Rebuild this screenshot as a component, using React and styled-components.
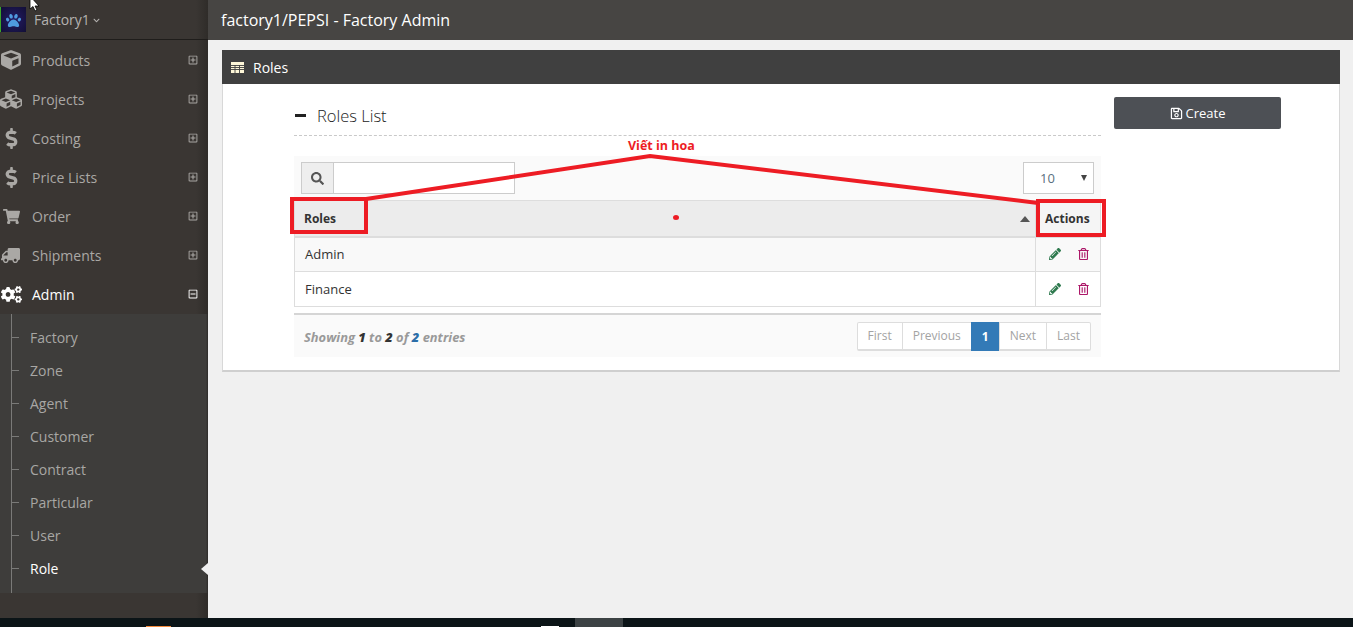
import React from "react"
import styled, { createGlobalStyle } from "styled-components"
import {
  FaCube,
  FaCubes,
  FaDollarSign,
  FaShoppingCart,
  FaTruck,
  FaCogs,
  FaRegPlusSquare,
  FaRegMinusSquare,
  FaSearch,
  FaRegSave,
  FaPencilAlt,
  FaRegTrashAlt,
  FaChevronDown,
  FaPaw,
} from "react-icons/fa"

const menu = [
  { label: "Products", icon: FaCube, size: 20 },
  { label: "Projects", icon: FaCubes, size: 22 },
  { label: "Costing", icon: FaDollarSign, size: 21 },
  { label: "Price Lists", icon: FaDollarSign, size: 21 },
  { label: "Order", icon: FaShoppingCart, size: 17 },
  { label: "Shipments", icon: FaTruck, size: 19, flip: true },
]

const subMenu = ["Factory", "Zone", "Agent", "Customer", "Contract", "Particular", "User", "Role"]

const TableIcon = () => (
  <svg width="13" height="11" viewBox="0 0 13 11">
    <rect width="13" height="11" fill="#fdf6d8" />
    <path d="M0 3.5h13M0 5.5h13M0 7.5h13M4 3v8M8.5 3v8" stroke="#404040" strokeWidth="0.9" />
  </svg>
)

const App = () => {
  return (
    <Screen>
      <GlobalStyle />
      <Main>
        <Sidebar>
          <Brand>
            <Logo>
              <FaPaw />
            </Logo>
            <BrandName>Factory1</BrandName>
            <FaChevronDown size={7} />
          </Brand>
          <Nav>
            {menu.map((item) => (
              <NavItem key={item.label}>
                <NavIcon $flip={item.flip}>
                  <item.icon size={item.size} />
                </NavIcon>
                <NavLabel>{item.label}</NavLabel>
                <FaRegPlusSquare size={10} />
              </NavItem>
            ))}
            <NavItem $open>
              <NavIcon>
                <FaCogs size={21} />
              </NavIcon>
              <NavLabel>Admin</NavLabel>
              <FaRegMinusSquare size={10} />
            </NavItem>
          </Nav>
          <SubNav>
            {subMenu.map((label) => (
              <SubItem key={label} $active={label === "Role"}>
                {label}
              </SubItem>
            ))}
          </SubNav>
        </Sidebar>
        <Content>
          <TitleBar>factory1/PEPSI - Factory Admin</TitleBar>
          <Page>
            <Panel>
              <PanelHead>
                <TableIcon />
                Roles
              </PanelHead>
              <PanelBody>
                <ListColumn>
                  <ListTitle>
                    <TitleDash />
                    Roles List
                  </ListTitle>
                  <Toolbar>
                    <SearchGroup>
                      <SearchAddon>
                        <FaSearch size={13} />
                      </SearchAddon>
                      <SearchInput />
                    </SearchGroup>
                    <PageSize>
                      10
                      <SizeCaret />
                    </PageSize>
                  </Toolbar>
                  <Table>
                    <thead>
                      <tr>
                        <HeadCell $sorted>
                          Roles
                          <SortCaret />
                        </HeadCell>
                        <HeadCell $narrow>Actions</HeadCell>
                      </tr>
                    </thead>
                    <tbody>
                      {["Admin", "Finance"].map((role, i) => (
                        <Row key={role} $odd={i === 0}>
                          <Cell>{role}</Cell>
                          <ActionCell>
                            <ActionIcons>
                              <EditIcon />
                              <DeleteIcon />
                            </ActionIcons>
                          </ActionCell>
                        </Row>
                      ))}
                    </tbody>
                  </Table>
                  <Footer>
                    <Info>
                      Showing <b>1</b> to <b>2</b> of <Total>2</Total> entries
                    </Info>
                    <Pager>
                      <PageLink>First</PageLink>
                      <PageLink>Previous</PageLink>
                      <PageLink $current>1</PageLink>
                      <PageLink>Next</PageLink>
                      <PageLink>Last</PageLink>
                    </Pager>
                  </Footer>
                </ListColumn>
                <CreateButton>
                  <FaRegSave size={13} />
                  Create
                </CreateButton>
              </PanelBody>
            </Panel>
          </Page>
        </Content>
      </Main>
      <Taskbar>
        <TaskMark $color="#f58b3c" $width={25} $height={1} $left={146} />
        <TaskMark $color="#ffffff" $width={18} $height={1} $left={370} />
        <TaskMark $color="#3c4244" $width={48} $height={9} $left={16} />
      </Taskbar>

      {/* annotation drawn over the screenshot */}
      <Cursor viewBox="0 0 14 12">
        <path d="M1 -4 L1 9 L4 6.5 L6 11 L8 10 L6 6 L10 6 Z" fill="#fff" stroke="#000" strokeWidth="0.8" />
      </Cursor>
      <Arrow viewBox="0 0 1353 627">
        <polyline points="366,199 650,156 1038,203" fill="none" stroke="#ed1c24" strokeWidth="4" />
      </Arrow>
      <Note>Viết in hoa</Note>
      <MarkBox $left={290} $top={197} $width={78} $height={37} />
      <MarkBox $left={1036} $top={199} $width={70} $height={38} />
      <Dot />
      <ActiveArrow />
    </Screen>
  )
}

export default App

const GlobalStyle = createGlobalStyle`
  html, body {
    margin: 0;
    padding: 0;
    height: 100%;
    overflow: hidden;
  }

  body {
    font-family: "Open Sans", "Liberation Sans", sans-serif;
    font-size: 13px;
    color: #333;
    background: #f0f0f0;
  }
`

const Screen = styled.div`
  position: relative;
  width: 1353px;
  height: 627px;
  overflow: hidden;
  display: flex;
  flex-direction: column;
`

const Main = styled.div`
  display: flex;
  height: 618px;
  background: #f0f0f0;
`

const Sidebar = styled.aside`
  width: 208px;
  flex: none;
  display: flex;
  flex-direction: column;
  background: linear-gradient(to right, #3a3633 0, #3a3633 196px, #2f2c29 208px);
  color: #a8a8a8;
`

const Brand = styled.div`
  height: 39px;
  flex: none;
  display: flex;
  align-items: center;
  gap: 3px;
  border-bottom: 1px solid #1f1d1b;
  color: #b4b2b0;
  box-sizing: content-box;

  svg:last-child {
    margin-top: 1px;
  }
`

const Logo = styled.div`
  width: 25px;
  height: 25px;
  margin: 0 5px 0 0;
  display: flex;
  align-items: center;
  justify-content: center;
  border-left: 1px solid #3aa629;
  background: radial-gradient(circle, #241c66 0, #120f36 100%);
  color: #4f9be0;
  font-size: 15px;
`

const BrandName = styled.span`
  font-size: 14px;
`

const Nav = styled.nav`
  display: flex;
  flex-direction: column;
`

const NavItem = styled.div`
  height: ${(p) => (p.$open ? "40px" : "39px")};
  display: flex;
  align-items: center;
  padding: ${(p) => (p.$open ? "0" : "1px")} 10px 0 0;
  box-sizing: border-box;
  color: ${(p) => (p.$open ? "#fff" : "#aaa8a5")};
`

const NavIcon = styled.span`
  width: 22px;
  margin-right: 10px;
  display: flex;
  justify-content: center;
  transform: ${(p) => (p.$flip ? "scaleX(-1)" : "none")};
`

const NavLabel = styled.span`
  flex: 1;
  font-size: 14px;
`

const SubNav = styled.ul`
  list-style: none;
  margin: 0;
  padding: 7px 0 8px;
  height: 279px;
  box-sizing: border-box;
  background: linear-gradient(to right, #3e3d3b 0, #3e3d3b 206px, #2d2b29 208px);
  position: relative;

  &::before {
    content: "";
    position: absolute;
    left: 11px;
    top: 0;
    bottom: 0;
    border-left: 1px solid #7a7a78;
  }
`

const SubItem = styled.li`
  position: relative;
  height: 33px;
  line-height: 33px;
  padding-left: 30px;
  font-size: 14px;
  color: ${(p) => (p.$active ? "#fff" : "#a8a7a4")};

  &::before {
    content: "";
    position: absolute;
    left: 12px;
    top: 16px;
    width: 7px;
    border-top: 1px solid #7a7a78;
  }
`

const Content = styled.div`
  flex: 1;
  min-width: 0;
  display: flex;
  flex-direction: column;
`

const TitleBar = styled.header`
  height: 40px;
  flex: none;
  display: flex;
  align-items: center;
  padding-left: 13px;
  background: #474543;
  color: #fff;
  font-size: 16px;
`

const Page = styled.main`
  padding: 10px 13px 0 14px;
`

const Panel = styled.section`
  background: #fff;
  border: 1px solid #d8d8d8;
  border-top: 0;
  border-bottom: 2px solid #cfcfcf;
`

const PanelHead = styled.div`
  height: 34px;
  margin: 0 -1px;
  display: flex;
  align-items: center;
  gap: 9px;
  padding-left: 9px;
  background: #404040;
  color: #fff;
  font-size: 14px;
`

const PanelBody = styled.div`
  display: flex;
  align-items: flex-start;
  padding: 13px 0 13px 71px;
  gap: 13px;
`

const ListColumn = styled.div`
  width: 807px;
  flex: none;
`

const ListTitle = styled.h3`
  height: 36px;
  margin: 0 0 20px;
  padding-bottom: 2px;
  display: flex;
  align-items: center;
  gap: 11px;
  box-sizing: content-box;
  border-bottom: 1px dashed #c9c9c9;
  font-size: 16.5px;
  font-weight: 300;
  color: #222;
`

const TitleDash = styled.span`
  width: 11px;
  height: 3px;
  margin-left: 1px;
  background: #222;
`

const Toolbar = styled.div`
  height: 44px;
  box-sizing: border-box;
  display: flex;
  justify-content: space-between;
  padding: 6px 7px 0;
  background: #fafafa;
`

const SearchGroup = styled.div`
  display: flex;
  height: 32px;
`

const SearchAddon = styled.span`
  width: 31px;
  display: flex;
  align-items: center;
  justify-content: center;
  border: 1px solid #ccc;
  background: #eee;
  color: #555;
`

const SearchInput = styled.div`
  width: 180px;
  border: 1px solid #ccc;
  border-left: 0;
  background: #fff;
`

const PageSize = styled.div`
  position: relative;
  width: 53px;
  height: 30px;
  display: flex;
  align-items: center;
  padding-left: 16px;
  border: 1px solid #ccc;
  background: #fff;
  color: #5a6f80;
  font-size: 13px;
`

const SizeCaret = styled.span`
  position: absolute;
  right: 6px;
  top: 12px;
  border-left: 3px solid transparent;
  border-right: 3px solid transparent;
  border-top: 6px solid #444;
`

const Table = styled.table`
  width: 100%;
  border-collapse: collapse;
  table-layout: fixed;
`

const HeadCell = styled.th`
  position: relative;
  width: ${(p) => (p.$narrow ? "65px" : "auto")};
  height: 36px;
  padding: 0 9px;
  box-sizing: border-box;
  text-align: left;
  font-size: 12px;
  font-weight: 700;
  color: #333;
  background: ${(p) => (p.$sorted ? "#ececec" : "#f5f5f5")};
  border: 1px solid #ddd;
  border-bottom: 2px solid #ddd;
`

const SortCaret = styled.span`
  position: absolute;
  right: 5px;
  top: 15px;
  border-left: 5px solid transparent;
  border-right: 5px solid transparent;
  border-bottom: 6px solid #555;
`

const Row = styled.tr`
  background: ${(p) => (p.$odd ? "#f9f9f9" : "#fff")};
`

const Cell = styled.td`
  height: 35px;
  padding: 0 10px;
  box-sizing: border-box;
  border: 1px solid #ddd;
  font-size: 13px;
  color: #333;
`

const ActionCell = styled(Cell)`
  padding: 0;
`

const ActionIcons = styled.div`
  display: flex;
  justify-content: center;
  align-items: center;
  gap: 17px;
  padding-left: 2px;
`

const EditIcon = styled(FaPencilAlt)`
  width: 12px;
  height: 12px;
  color: #2f7a4f;
`

const DeleteIcon = styled(FaRegTrashAlt)`
  width: 11px;
  height: 12px;
  color: #ac1768;
`

const Footer = styled.div`
  height: 44px;
  margin-top: 6px;
  box-sizing: border-box;
  display: flex;
  align-items: center;
  justify-content: space-between;
  padding: 0 10px;
  border-top: 2px solid #d5d5d5;
  background: #fafafa;
`

const Info = styled.span`
  padding-top: 1px;
  font-size: 12.9px;
  font-weight: 700;
  font-style: italic;
  color: #999;

  b {
    color: #333;
  }
`

const Total = styled.b`
  && {
    color: #2b6ea8;
  }
`

const Pager = styled.div`
  display: flex;
  height: 29px;
  border: 1px solid #ddd;
  border-bottom-width: 2px;
  border-radius: 2px;
  background: #fff;
  box-sizing: border-box;
`

const PageLink = styled.span`
  display: flex;
  align-items: center;
  padding: 0 10px 0 ${(p) => (p.$current ? "11px" : "10px")};
  margin-top: ${(p) => (p.$current ? "-1px" : "0")};
  margin-bottom: ${(p) => (p.$current ? "-2px" : "0")};
  border-left: ${(p) => (p.$current ? "0" : "1px solid #ddd")};
  font-size: 12px;
  font-weight: ${(p) => (p.$current ? 700 : 400)};
  color: ${(p) => (p.$current ? "#fff" : "#a3a3a3")};
  background: ${(p) => (p.$current ? "#337ab7" : "transparent")};

  &:first-child {
    border-left: 0;
  }
`

const CreateButton = styled.button`
  width: 167px;
  height: 32px;
  display: flex;
  align-items: center;
  justify-content: center;
  gap: 3px;
  border: 0;
  border-radius: 2px;
  background: #4d5055;
  color: #fff;
  font-family: inherit;
  font-size: 13px;
`

const Taskbar = styled.footer`
  position: relative;
  height: 9px;
  flex: none;
  display: flex;
  align-items: flex-end;
  background: #0b1417;
`

const TaskMark = styled.span`
  flex: none;
  margin-left: ${(p) => p.$left}px;
  width: ${(p) => p.$width}px;
  height: ${(p) => p.$height}px;
  background: ${(p) => p.$color};
`

const Cursor = styled.svg`
  position: absolute;
  left: 29px;
  top: 0;
  width: 14px;
  height: 12px;
`

const Arrow = styled.svg`
  position: absolute;
  inset: 0;
  width: 1353px;
  height: 627px;
  pointer-events: none;
`

const Note = styled.span`
  position: absolute;
  left: 628px;
  top: 137px;
  font-size: 12.5px;
  font-weight: 700;
  color: #ed1c24;
`

const MarkBox = styled.div`
  position: absolute;
  left: ${(p) => p.$left}px;
  top: ${(p) => p.$top}px;
  width: ${(p) => p.$width}px;
  height: ${(p) => p.$height}px;
  box-sizing: border-box;
  border: 4px solid #ed1c24;
`

const Dot = styled.span`
  position: absolute;
  left: 673px;
  top: 215px;
  width: 6px;
  height: 5px;
  border-radius: 50%;
  background: #ed1c24;
`

const ActiveArrow = styled.span`
  position: absolute;
  left: 201px;
  top: 563px;
  border-top: 6px solid transparent;
  border-bottom: 6px solid transparent;
  border-right: 7px solid #f0f0f0;
`
